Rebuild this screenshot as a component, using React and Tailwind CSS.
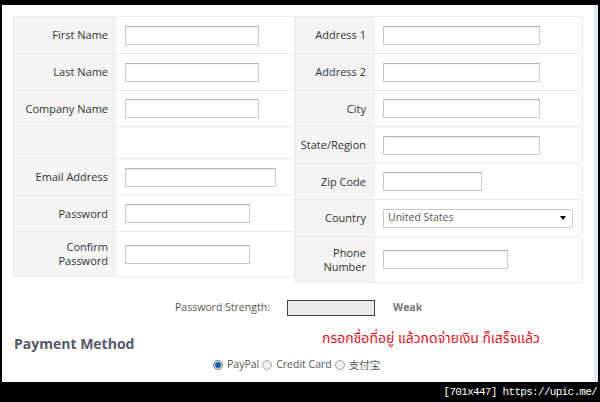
import { useState } from "react";

const leftRows = [
  { label: "First Name", h: "h-[36px]", input: "w-[134px]" },
  { label: "Last Name", h: "h-[37px]", input: "w-[134px]" },
  { label: "Company Name", h: "h-[36px]", input: "w-[134px]" },
  { label: "", h: "h-[32px]", input: null },
  { label: "Email Address", h: "h-[37px]", input: "w-[151px]" },
  { label: "Password", h: "h-[36px]", input: "w-[125px]" },
  { label: ["Confirm", "Password"], h: "h-[45px]", input: "w-[125px]" },
];

const rightRows = [
  { label: "Address 1", h: "h-[36px]", input: "w-[157px]" },
  { label: "Address 2", h: "h-[37px]", input: "w-[157px]" },
  { label: "City", h: "h-[36px]", input: "w-[157px]" },
  { label: "State/Region", h: "h-[37px]", input: "w-[157px]" },
  { label: "Zip Code", h: "h-[36px]", input: "w-[99px]" },
  { label: "Country", h: "h-[37px]", select: true },
  { label: ["Phone", "Number"], h: "h-[46px]", input: "w-[125px]" },
];

const TextBox = ({ width }) => (
  <div className={`${width} h-[19px] bg-white border border-[#c9c9c9] border-t-[#b5b5b5] rounded-[1px] shadow-[inset_0_1px_1px_rgba(0,0,0,0.06)]`} />
);

// two-column label / field table
const FormTable = ({ rows, labelW, inputW }) => (
  <div className="flex flex-col border border-[#ececec]">
    {rows.map((r, i) => (
      <div key={i} className={`flex ${r.h} ${i > 0 ? "border-t border-[#e9e9e9]" : ""}`}>
        <div className={`${labelW} bg-[#f4f4f4] flex items-center justify-end pr-[9px] text-right leading-[14px] text-[#333]`}>
          {Array.isArray(r.label) ? (
            <div className="flex flex-col items-end">
              {r.label.map((l) => <span key={l}>{l}</span>)}
            </div>
          ) : (
            r.label
          )}
        </div>
        <div className={`${inputW} bg-white flex items-center pl-[8px]`}>
          {r.select ? (
            <div className="w-[190px] h-[19px] border border-[#c9c9c9] flex items-center justify-between px-[4px] text-[10.5px] text-[#555] rounded-[1px]">
              <span>United States</span>
              <span className="w-0 h-0 border-l-[3px] border-r-[3px] border-t-[4px] border-l-transparent border-r-transparent border-t-black mr-[2px]" />
            </div>
          ) : r.input ? (
            <TextBox width={r.input} />
          ) : null}
        </div>
      </div>
    ))}
  </div>
);

const Radio = ({ checked }) =>
  checked ? (
    <span className="inline-flex items-center justify-center w-[10px] h-[10px] rounded-full border border-[#6f7f8f] bg-[#dfe9f2]">
      <span className="w-[6px] h-[6px] rounded-full bg-[#1b5ea8]" />
    </span>
  ) : (
    <span className="inline-block w-[10px] h-[10px] rounded-full border border-[#a9a9a9] bg-[#f0f0f0]" />
  );

export default function App() {
  const [pay] = useState("paypal");
  return (
    <div className="w-[600px] h-[402px] bg-black flex flex-col overflow-hidden" style={{ fontFamily: "'Open Sans', 'Noto Sans', sans-serif" }}>
      <div className="h-[5px]" />
      <div className="flex h-[377px]">
        <div className="w-[2px]" />
        <div className="w-[592px] bg-white flex flex-col pl-[11px] pt-[11px] text-[11px]">
          <div className="flex items-start">
            <FormTable rows={leftRows} labelW="w-[103px]" inputW="w-[177px]" />
            <FormTable rows={rightRows} labelW="w-[79px]" inputW="w-[207px]" />
          </div>

          <div className="flex items-center mt-[17px] h-[16px]">
            <span className="ml-[162px] w-[112px] text-[10.5px] text-[#555]">Password Strength:</span>
            <div className="w-[88px] h-[16px] border border-[#444] bg-[#ececec]" />
            <span className="ml-[18px] text-[10.5px] font-bold text-[#777]">Weak</span>
          </div>

          <div className="flex items-start mt-[6px] h-[30px]">
            <span className="w-[309px] mt-[11px] pl-[1px] text-[14px] font-bold text-[#535a66]">Payment Method</span>
            <span className="mt-[7px] text-[14px] text-[#e0141e] leading-[20px]" style={{ fontFamily: "'Noto Sans Thai', 'Liberation Sans', sans-serif" }}>
              กรอกชื่อที่อยู่ แล้วกดจ่ายเงิน ก็เสร็จแล้ว
            </span>
          </div>

          <div className="flex items-center mt-[5px] ml-[200px] text-[10.5px] text-[#555] gap-[3px]">
            <Radio checked={pay === "paypal"} />
            <span className="ml-[1px]">PayPal</span>
            <Radio checked={pay === "card"} />
            <span className="ml-[1px]">Credit Card</span>
            <Radio checked={pay === "alipay"} />
            <span className="ml-[1px]" style={{ fontFamily: "'Noto Sans CJK SC', sans-serif" }}>支付宝</span>
          </div>
        </div>
        <div className="w-[4px] bg-[#dce9f7]" />
        <div className="w-[2px]" />
      </div>
      <div className="h-[20px] flex items-center justify-end pr-[3px]">
        <span className="text-white text-[11px] tracking-[-0.7px]" style={{ fontFamily: "'Liberation Mono', monospace" }}>
          [701x447] https://upic.me/
        </span>
      </div>
    </div>
  );
}
